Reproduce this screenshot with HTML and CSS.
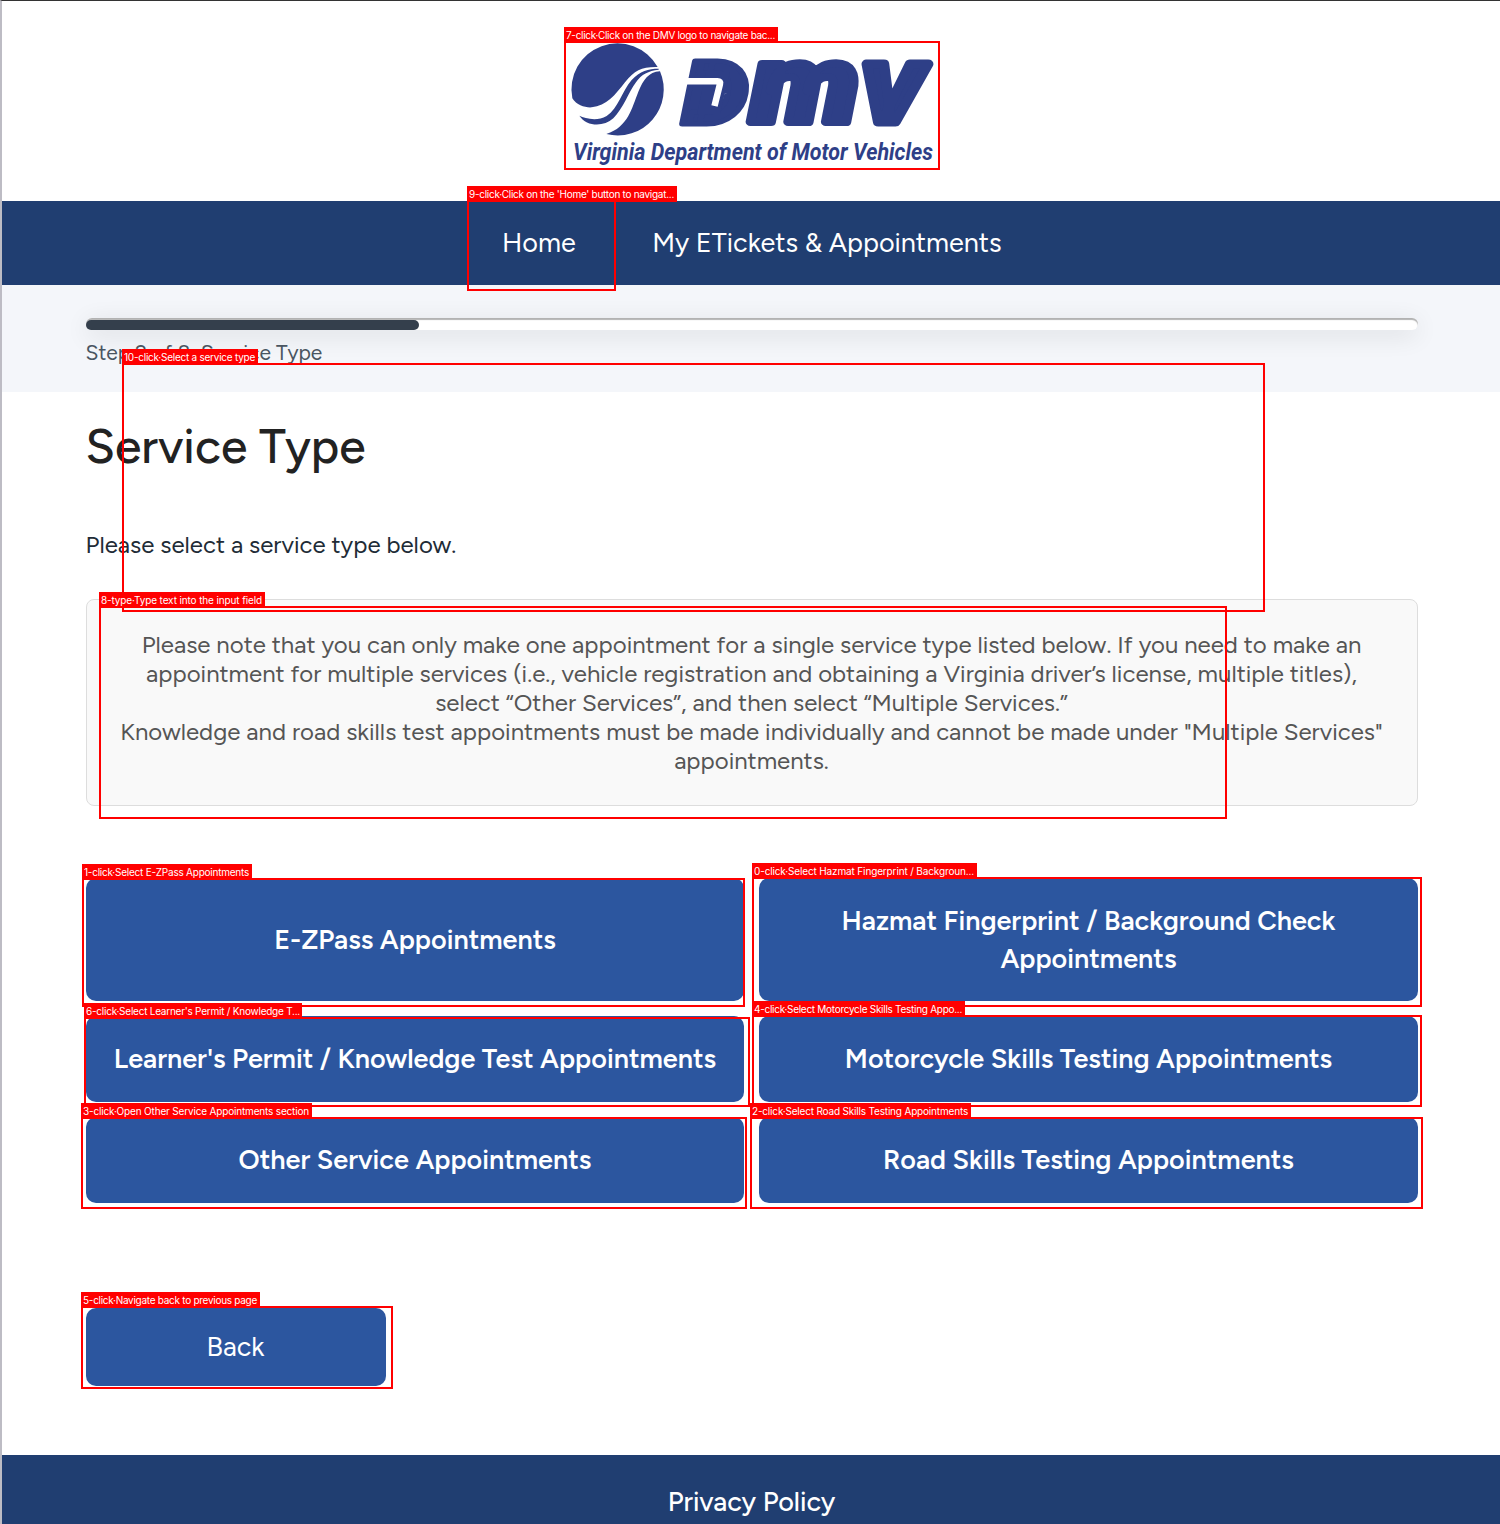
FILE: index.html
```
<!DOCTYPE html>
<html lang="en">
<head>
<meta charset="utf-8">
<title>Service Type</title>
<link rel="stylesheet" href="styles.css">
</head>
<body>
<div class="page">
  <header class="header">
    <svg class="logo" viewBox="564 41 376 129" role="img" aria-label="Virginia Department of Motor Vehicles">
      <g fill="#2e3f87">
        <g transform="translate(560 36.700) scale(.33333)">
          <path d="M37 185C50 207 75 213 95 212C140 208 165 175 195 137C225 100 245 90 293 91A138 138 0 0 0 37 185Z"/>
          <path d="M58 237C75 245 110 255 140 238C175 215 185 165 215 130C240 103 265 96 296 96V99C265 103 245 112 228 137C205 168 190 215 160 245C130 272 80 270 58 237Z"/>
          <path d="M300 104C265 106 250 130 235 165C215 215 205 270 139 292A138 138 0 0 0 300 104Z"/>
        </g>
        <g class="wordmark">
          <text class="letter-d" transform="translate(682 124)" textLength="66" lengthAdjust="spacingAndGlyphs">D</text>
          <text class="letter-m" transform="translate(751 122)" textLength="108" lengthAdjust="spacingAndGlyphs">m</text>
          <text class="letter-v" transform="translate(860.500 122)" textLength="61" lengthAdjust="spacingAndGlyphs">V</text>
        </g>
        <path d="M706 72H730L720 114H697Z"/>
        <path d="M687 81.300H717.500Q721 81.300 720 84L714.500 106" fill="none" stroke="#fff" stroke-width="6.500"/>
        <text class="tagline" x="573" y="160" textLength="360" lengthAdjust="spacingAndGlyphs">Virginia Department of Motor Vehicles</text>
      </g>
    </svg>
  </header>
  <nav class="nav"><a class="nav-home">Home</a><a>My ETickets &amp; Appointments</a></nav>
  <section class="steps">
    <div class="progress"><div class="progress-fill"></div></div>
    <p class="step-text">Step 2 of 8: Service Type</p>
  </section>
  <main class="main">
    <h1>Service Type</h1>
    <p class="intro">Please select a service type below.</p>
    <div class="note">Please note that you can only make one appointment for a single service type listed below. If you need to make an<br>appointment for multiple services (i.e., vehicle registration and obtaining a Virginia driver’s license, multiple titles),<br>select “Other Services”, and then select “Multiple Services.”<br>Knowledge and road skills test appointments must be made individually and cannot be made under "Multiple Services"<br>appointments.</div>
    <div class="services">
      <button class="btn">E-ZPass Appointments</button>
      <button class="btn">Hazmat Fingerprint / Background Check Appointments</button>
      <button class="btn">Learner's Permit / Knowledge Test Appointments</button>
      <button class="btn">Motorcycle Skills Testing Appointments</button>
      <button class="btn">Other Service Appointments</button>
      <button class="btn">Road Skills Testing Appointments</button>
    </div>
    <button class="btn back">Back</button>
  </main>
  <footer class="footer"><a>Privacy Policy</a></footer>
</div>

<div class="mark m7"><span>7-click·Click on the DMV logo to navigate bac...</span></div>
<div class="mark m9"><span>9-click·Click on the 'Home' button to navigat...</span></div>
<div class="mark m10"><span>10-click·Select a service type</span></div>
<div class="mark m8"><span>8-type·Type text into the input field</span></div>
<div class="mark m1"><span>1-click·Select E-ZPass Appointments</span></div>
<div class="mark m0"><span>0-click·Select Hazmat Fingerprint / Backgroun...</span></div>
<div class="mark m6"><span>6-click·Select Learner's Permit / Knowledge T...</span></div>
<div class="mark m4"><span>4-click·Select Motorcycle Skills Testing Appo...</span></div>
<div class="mark m3"><span>3-click·Open Other Service Appointments section</span></div>
<div class="mark m2"><span>2-click·Select Road Skills Testing Appointments</span></div>
<div class="mark m5"><span>5-click·Navigate back to previous page</span></div>
</body>
</html>
```
FILE: styles.css
```
* { box-sizing: border-box; }
body { margin: 0; background: #fff; font-family: "Figtree", "Lato", sans-serif; color: #212529; }
h1, p { margin: 0; }
.page { height: 1524px; overflow: hidden; border-top: 1px solid #333; border-left: 2px solid #bdbcc4; }

.header { height: 200px; display: flex; justify-content: center; padding: 40px 0 0 2px; }
.logo { width: 376px; height: 129px; overflow: visible; }
.wordmark { font-family: "Roboto", sans-serif; font-weight: 900; font-style: italic; stroke: #2e3f87; stroke-linejoin: round; }
.letter-d { font-size: 88px; stroke-width: 5px; }
.letter-m { font-size: 109px; stroke-width: 8px; }
.letter-v { font-size: 82px; stroke-width: 9px; }
.tagline { font: italic 700 24px "Roboto", sans-serif; }

.nav { height: 84px; background: #203e71; color: #fff; font-size: 27px; display: flex; align-items: center; padding: 0 0 2px 500px; gap: 76.5px; }

.steps { height: 107px; background: #f4f6fa; padding: 33px 82px 0 84px; }
.progress { height: 12px; border-radius: 6px; background: #fff; padding-top: 2px; box-shadow: 0 5px 25px rgba(0, 0, 0, .12), inset 0 2px 1px rgba(0, 0, 0, .3); }
.progress-fill { width: 25%; height: 10px; border-radius: 5px; background: #343f4c; }
.step-text { margin: 10px 0 0 -.5px; font-size: 21px; line-height: 26px; color: #495561; }

.main { height: 1063px; padding: 25px 82px 0 83.5px; }
h1 { font-size: 48px; line-height: 58px; font-weight: 500; color: #222; }
.intro { margin-top: 55px; font-size: 24px; line-height: 29px; color: #212b36; }
.note { margin: 40px 0 0 .5px; height: 207px; padding: 30px 1px 0 0; border: 1px solid #ddd; border-radius: 8px; background: #f9f9f9; color: #555; font-size: 24px; line-height: 29px; text-align: center; white-space: nowrap; }
.services { margin: 72px 0 0 .5px; display: grid; grid-template-columns: 658px 659px; grid-template-rows: 123px 86px 86px; gap: 15px; }
.btn { border: 0; border-radius: 10px; background: #2c569f; color: #fff; font: 600 27px/38px "Figtree", "Lato", sans-serif; padding: 0 20px; }
.back { display: block; margin: 105px 0 0 .5px; width: 300px; height: 78px; padding-right: 21px; font-weight: 400; }

.footer { height: 94px; background: #203e71; color: #fff; font-size: 27px; font-weight: 500; display: flex; justify-content: center; align-items: center; padding: 0 0 2px 1px; }

/* Annotation boxes laid over the page */
.mark { position: absolute; border: 2px solid #f00; }
.mark span { position: absolute; left: -2px; bottom: 100%; height: 16px; padding: 1px 0 0 2px; background: #f00; color: #fff; font: 10px/14px "Inter", sans-serif; white-space: nowrap; }
.m7 { left: 564px; top: 41px; width: 376px; height: 129px; }
.m7 span { width: 214px; letter-spacing: -.305px; }
.m9 { left: 467px; top: 200px; width: 149px; height: 91px; }
.m9 span { width: 210px; letter-spacing: -.279px; }
.m10 { left: 122px; top: 363px; width: 1143px; height: 249px; }
.m10 span { width: 136px; letter-spacing: -.245px; }
.m8 { left: 99px; top: 606px; width: 1128px; height: 213px; }
.m8 span { width: 166px; letter-spacing: -.128px; }
.m1 { left: 82px; top: 878px; width: 663px; height: 129px; }
.m1 span { width: 170px; letter-spacing: -.232px; }
.m0 { left: 752px; top: 877px; width: 670px; height: 130px; }
.m0 span { width: 225px; letter-spacing: -.14px; }
.m6 { left: 84px; top: 1017px; width: 666px; height: 90px; }
.m6 span { width: 218px; letter-spacing: -.235px; }
.m4 { left: 752px; top: 1015px; width: 670px; height: 92px; }
.m4 span { width: 213px; letter-spacing: -.28px; }
.m3 { left: 81px; top: 1117px; width: 666px; height: 92px; }
.m3 span { width: 231px; letter-spacing: -.17px; }
.m2 { left: 750px; top: 1117px; width: 673px; height: 92px; }
.m2 span { width: 221px; letter-spacing: -.179px; }
.m5 { left: 81px; top: 1306px; width: 312px; height: 83px; }
.m5 span { width: 179px; letter-spacing: -.276px; }
```
